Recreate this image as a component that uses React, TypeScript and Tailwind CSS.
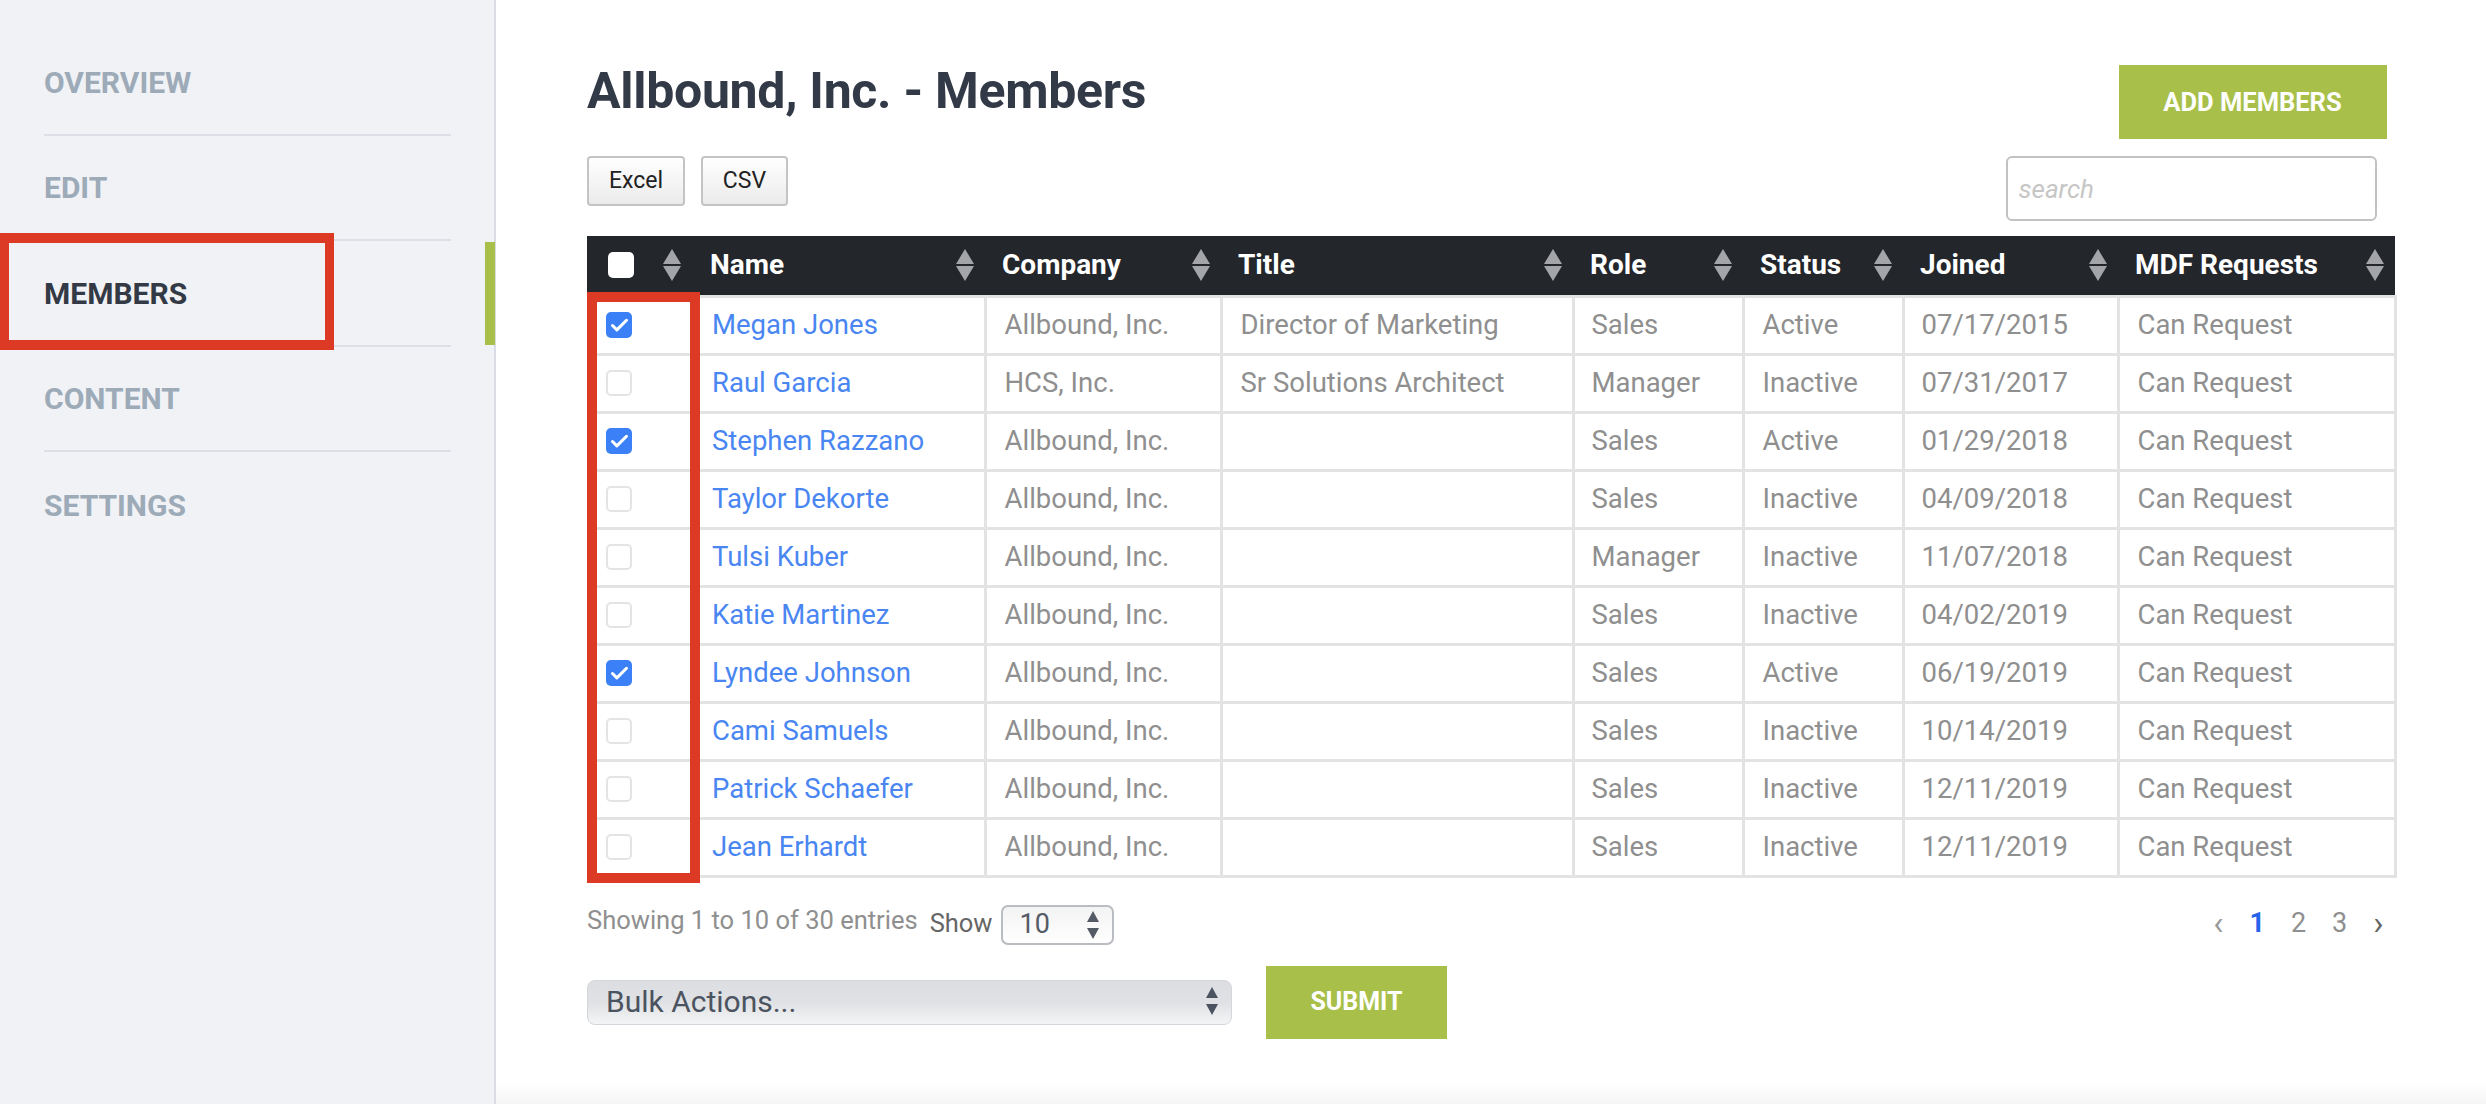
import { Check } from 'lucide-react';

const navItems = ['OVERVIEW', 'EDIT', 'MEMBERS', 'CONTENT', 'SETTINGS'];

const columns = [
  { label: 'Name', width: 398 },
  { label: 'Company', width: 236 },
  { label: 'Title', width: 352 },
  { label: 'Role', width: 170 },
  { label: 'Status', width: 160 },
  { label: 'Joined', width: 215 },
  { label: 'MDF Requests', width: 277 },
];

const members = [
  { name: 'Megan Jones', company: 'Allbound, Inc.', title: 'Director of Marketing', role: 'Sales', status: 'Active', joined: '07/17/2015', checked: true },
  { name: 'Raul Garcia', company: 'HCS, Inc.', title: 'Sr Solutions Architect', role: 'Manager', status: 'Inactive', joined: '07/31/2017', checked: false },
  { name: 'Stephen Razzano', company: 'Allbound, Inc.', title: '', role: 'Sales', status: 'Active', joined: '01/29/2018', checked: true },
  { name: 'Taylor Dekorte', company: 'Allbound, Inc.', title: '', role: 'Sales', status: 'Inactive', joined: '04/09/2018', checked: false },
  { name: 'Tulsi Kuber', company: 'Allbound, Inc.', title: '', role: 'Manager', status: 'Inactive', joined: '11/07/2018', checked: false },
  { name: 'Katie Martinez', company: 'Allbound, Inc.', title: '', role: 'Sales', status: 'Inactive', joined: '04/02/2019', checked: false },
  { name: 'Lyndee Johnson', company: 'Allbound, Inc.', title: '', role: 'Sales', status: 'Active', joined: '06/19/2019', checked: true },
  { name: 'Cami Samuels', company: 'Allbound, Inc.', title: '', role: 'Sales', status: 'Inactive', joined: '10/14/2019', checked: false },
  { name: 'Patrick Schaefer', company: 'Allbound, Inc.', title: '', role: 'Sales', status: 'Inactive', joined: '12/11/2019', checked: false },
  { name: 'Jean Erhardt', company: 'Allbound, Inc.', title: '', role: 'Sales', status: 'Inactive', joined: '12/11/2019', checked: false },
];

function SortArrows() {
  return (
    <svg width="18" height="32" viewBox="0 0 18 32" className="shrink-0">
      <path d="M9 0 L18 15 L0 15 Z" fill="#a3a5a8" />
      <path d="M0 17 L18 17 L9 32 Z" fill="#a3a5a8" />
    </svg>
  );
}

function SelectArrows({ color }: { color: string }) {
  return (
    <svg width="12" height="28" viewBox="0 0 12 28" className="shrink-0">
      <path d="M6 0 L12 11 L0 11 Z" fill={color} />
      <path d="M0 17 L12 17 L6 28 Z" fill={color} />
    </svg>
  );
}

function RowCheckbox({ checked }: { checked: boolean }) {
  if (checked) {
    return (
      <div className="w-[26px] h-[26px] rounded-[5px] bg-[#3b80f6] flex items-center justify-center">
        <Check className="w-[21px] h-[21px] text-white" strokeWidth={3.5} />
      </div>
    );
  }
  return <div className="w-[26px] h-[26px] rounded-[5px] border-2 border-[#e4e4e4] bg-white"></div>;
}

export default function App() {
  return (
    <div className="relative flex w-[2486px] h-[1104px] overflow-hidden bg-white font-['Roboto',sans-serif]">
      <div className="relative w-[496px] h-full shrink-0 bg-[#f0f2f5] border-r-2 border-[#d9dde3] pt-[30px]">
        {navItems.map((item, i) => (
          <div
            key={item}
            className={`ml-[44px] w-[407px] h-[105.5px] pt-[1px] flex items-center text-[30px] font-bold ${
              i < navItems.length - 1 ? 'border-b-2 border-[#dcdfe5]' : ''
            } ${item === 'MEMBERS' ? 'text-[#333a45]' : 'text-[#9daab8]'}`}
          >
            {item}
          </div>
        ))}
        <div className="absolute left-[485px] top-[242px] w-[10px] h-[103px] bg-[#a8c04a]"></div>
        <div className="absolute left-0 top-[233px] w-[334px] h-[117px] border-x-[9px] border-y-[10px] border-[#dc3a25]"></div>
      </div>

      <div className="relative flex-1 pl-[91px] pr-[91px] pt-[65px]">
        <div className="flex items-start justify-between h-[74px] pr-[10px]">
          <h1 className="-mt-[2px] text-[50px] leading-[56px] tracking-[-0.3px] font-bold text-[#333a47]">Allbound, Inc. - Members</h1>
          <button className="w-[268px] h-[74px] bg-[#a8c04a] text-white text-[25.5px] font-bold">ADD MEMBERS</button>
        </div>

        <div className="flex items-start justify-between h-[97px] pt-[17px] pr-[20px]">
          <div className="flex gap-[16px]">
            <button className="w-[98px] h-[50px] rounded-[4px] border-2 border-[#c4c4c4] bg-gradient-to-b from-white to-[#ebebeb] text-[23px] text-[#222]">Excel</button>
            <button className="w-[87px] h-[50px] rounded-[4px] border-2 border-[#c4c4c4] bg-gradient-to-b from-white to-[#ebebeb] text-[23px] text-[#222]">CSV</button>
          </div>
          <input
            placeholder="search"
            className="w-[371px] h-[65px] rounded-[6px] border-2 border-[#c2c2c2] px-[11px] text-[26px] italic outline-none placeholder:text-[#c6c6c6]"
          />
        </div>

        <table className="table-fixed w-[1808px] border-collapse">
          <colgroup>
            <col className="w-[0px]" />
            {columns.map((col) => (
              <col key={col.label} style={{ width: col.width }} />
            ))}
          </colgroup>
          <thead>
            <tr className="h-[60px] bg-[#23262b]">
              <th className="w-0 p-0"></th>
              {columns.map((col, i) => (
                <th key={col.label} className="p-0 text-left text-white text-[28px] font-bold">
                  <div className={`flex items-center justify-between pr-[11px] ${i === 0 ? 'pl-[21px]' : 'pl-[17px]'}`}>
                    {i === 0 ? (
                      <div className="flex items-center gap-[29px]">
                        <div className="w-[26px] h-[26px] rounded-[5px] bg-white"></div>
                        <SortArrows />
                        <span>{col.label}</span>
                      </div>
                    ) : (
                      <span>{col.label}</span>
                    )}
                    <SortArrows />
                  </div>
                </th>
              ))}
            </tr>
          </thead>
          <tbody>
            {members.map((m) => (
              <tr key={m.name} className="h-[58px] text-[27.5px] text-[#8f8f8f]">
                <td className="w-0 p-0"></td>
                <td className="p-0 border-y-[3px] border-[#e3e3e3]">
                  <div className="flex items-center pl-[19px]">
                    <RowCheckbox checked={m.checked} />
                    <a className="ml-[80px] text-[#4a86f2]">{m.name}</a>
                  </div>
                </td>
                <td className="px-[18px] py-0 border-[3px] border-[#e3e3e3]">{m.company}</td>
                <td className="px-[18px] py-0 border-[3px] border-[#e3e3e3]">{m.title}</td>
                <td className="px-[17px] py-0 border-[3px] border-[#e3e3e3]">{m.role}</td>
                <td className="px-[18px] py-0 border-[3px] border-[#e3e3e3]">{m.status}</td>
                <td className="px-[17px] py-0 border-[3px] border-[#e3e3e3]">{m.joined}</td>
                <td className="px-[18px] py-0 border-[3px] border-[#e3e3e3]">Can Request</td>
              </tr>
            ))}
          </tbody>
        </table>

        <div className="flex items-start justify-between mt-[27px] pr-[13px]">
          <div className="flex items-start">
            <span className="text-[25.5px] leading-[30px] text-[#8f8f8f]">Showing 1 to 10 of 30 entries</span>
            <span className="ml-[12px] mt-[3px] text-[25.5px] leading-[30px] text-[#666]">Show</span>
            <div className="ml-[8px] w-[113px] h-[40px] rounded-[7px] border-2 border-[#b9bcc0] bg-gradient-to-b from-[#f3f3f3] to-white flex items-center justify-between pl-[17px] pr-[13px] text-[27px] text-[#555b66]">
              <span>10</span>
              <SelectArrows color="#555b66" />
            </div>
          </div>
          <div className="flex items-center gap-[26px] text-[27px] leading-[30px] text-[#8f8f8f] mt-[3px]">
            <span className="text-[34px] text-[#9a9a9a]">‹</span>
            <span className="font-bold text-[#2563eb]">1</span>
            <span>2</span>
            <span>3</span>
            <span className="text-[34px] text-[#666]">›</span>
          </div>
        </div>

        <div className="flex items-center mt-[21px] gap-[34px]">
          <div className="w-[645px] h-[45px] rounded-[8px] border border-[#d3d6da] bg-gradient-to-b from-[#dcdee1] via-[#dfe1e4] to-[#f4f5f6] flex items-center justify-between pl-[18px] pr-[13px] pb-[2px] text-[30px] text-[#4c5360]">
            <span>Bulk Actions...</span>
            <SelectArrows color="#4c5360" />
          </div>
          <button className="w-[181px] h-[73px] bg-[#a8c04a] text-white text-[25px] font-bold">SUBMIT</button>
        </div>

        <div className="absolute left-[91px] top-[292px] w-[113px] h-[591px] border-[10px] border-[#dc3a25] pointer-events-none"></div>
      </div>

      <div className="absolute left-[496px] right-0 bottom-0 h-[22px] bg-gradient-to-b from-white to-[#f5f5f6]"></div>
    </div>
  );
}
